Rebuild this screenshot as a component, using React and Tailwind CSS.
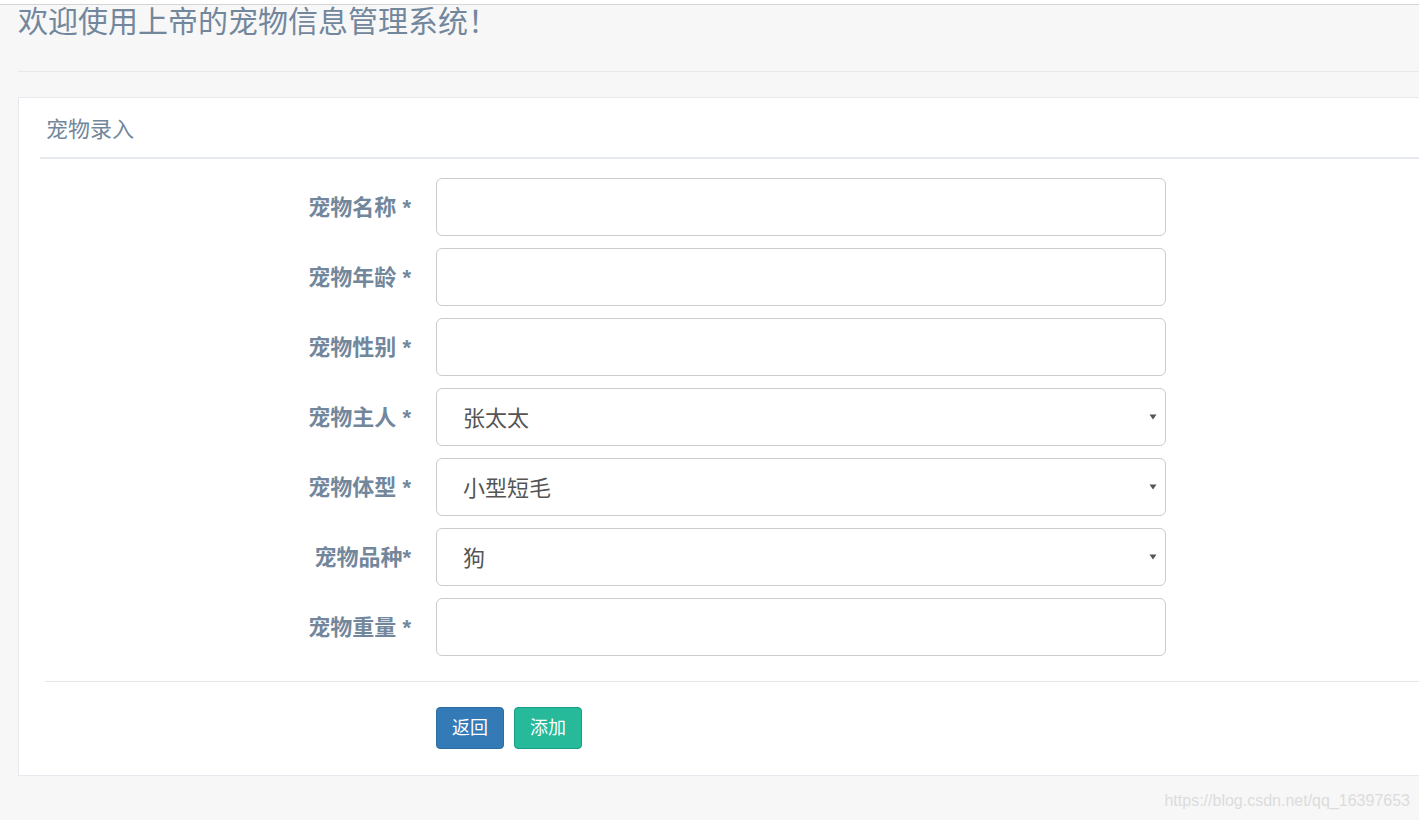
import React from "react";

const font = { fontFamily: '"Liberation Sans", "Noto Sans CJK SC", sans-serif' };

function Arrow() {
  return (
    <svg width="8" height="6" viewBox="0 0 8 6" className="shrink-0">
      <path d="M0.5 0.5 L7.5 0.5 L4 5.5 Z" fill="#555" />
    </svg>
  );
}

function Row({ label, value, select }) {
  return (
    <div className="flex items-center h-[58px]">
      <div className="w-[371px] text-right text-[22px] font-bold text-[#73879C] leading-none pt-[2px]">
        {label}
      </div>
      <div className="ml-[25px] w-[730px] h-[58px] border border-[#cccccc] rounded-[6px] bg-white flex items-center pl-[26px] pr-[8px]">
        <span className="flex-1 text-[22px] text-[#555555] leading-none pt-[3px]">{value}</span>
        {select && <Arrow />}
      </div>
    </div>
  );
}

export default function App() {
  const rows = [
    { label: "宠物名称 *" },
    { label: "宠物年龄 *" },
    { label: "宠物性别 *" },
    { label: "宠物主人 *", value: "张太太", select: true },
    { label: "宠物体型 *", value: "小型短毛", select: true },
    { label: "宠物品种*", value: "狗", select: true },
    { label: "宠物重量 *" },
  ];
  return (
    <div className="relative w-[1419px] h-[820px] overflow-hidden bg-[#f7f7f7]" style={font}>
      <div className="h-[4px] bg-white" />
      <div className="h-px bg-[#d4d4d4]" />
      <div className="pl-[18px]">
        <div className="h-[66px] pt-[1px]">
          <div className="text-[30px] leading-[32px] text-[#73879C] font-normal">
            欢迎使用上帝的宠物信息管理系统！
          </div>
        </div>
        <div className="h-px bg-[#e8e8e8]" />
      </div>
      <div className="mt-[25px] ml-[18px] w-[1430px] h-[679px] border border-[#e6e9ed] bg-white pl-[21px]">
        <div className="h-[59px] pt-[21px] pl-[6px] text-[22px] leading-[22px] text-[#73879C]">
          宠物录入
        </div>
        <div className="h-[2px] bg-[#e6e9ed]" />
        <div className="mt-[19px] flex flex-col gap-[12px]">
          {rows.map((r) => (
            <Row key={r.label} {...r} />
          ))}
        </div>
        <div className="mt-[25px] ml-[5px] h-px bg-[#e5e5e5]" />
        <div className="mt-[25px] ml-[396px] flex gap-[10px]">
          <button className="w-[68px] h-[42px] rounded-[4px] bg-[#337ab7] border border-[#2e6da4] text-white text-[18px] leading-none">
            返回
          </button>
          <button className="w-[68px] h-[42px] rounded-[4px] bg-[#26B99A] border border-[#169F85] text-white text-[18px] leading-none">
            添加
          </button>
        </div>
      </div>
      <div className="absolute right-[9px] top-[791px] text-[16px] leading-[20px] text-[#dcdcdc]">
        https://blog.csdn.net/qq_16397653
      </div>
    </div>
  );
}
